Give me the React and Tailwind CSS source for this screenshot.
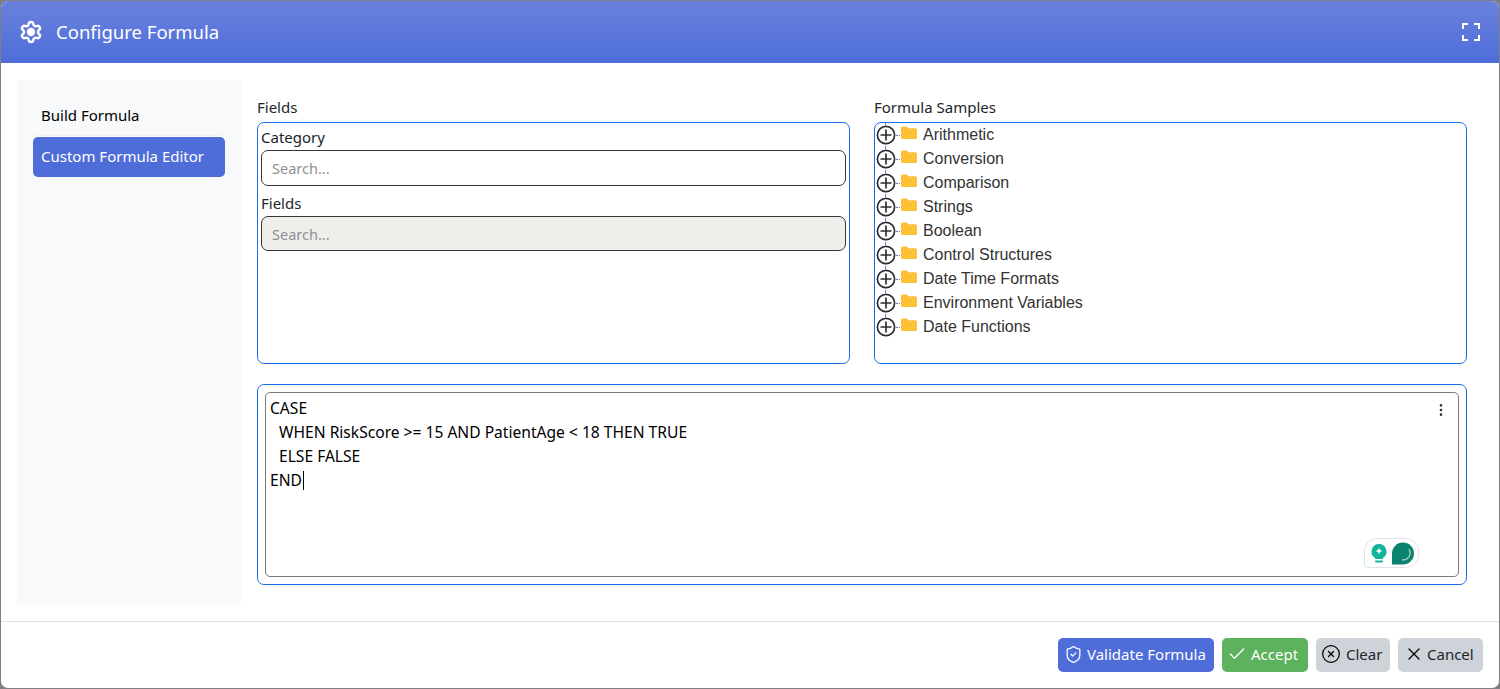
import { Settings, ShieldCheck, Check, CircleX, X, EllipsisVertical } from "lucide-react";

const samples = [
  "Arithmetic",
  "Conversion",
  "Comparison",
  "Strings",
  "Boolean",
  "Control Structures",
  "Date Time Formats",
  "Environment Variables",
  "Date Functions",
];

function TreeRow({ label, last }) {
  return (
    <div className="flex h-6 items-center">
      <div className="relative h-6 w-[21px] shrink-0">
        {/* dotted tree line */}
        <div className={`absolute left-[10px] top-0 w-0 border-l border-dotted border-[#5b7bd5] ${last ? "h-3" : "h-6"}`} />
        <svg width="20" height="20" viewBox="0 0 20 20" className="absolute left-px top-0.5">
          <circle cx="10" cy="10" r="8.6" fill="#fff" stroke="#2b2e33" strokeWidth="1.7" />
          <path d="M4.5 10h11M10 4.5v11" stroke="#2b2e33" strokeWidth="1.7" />
        </svg>
      </div>
      <div className="w-[4px] border-t border-dotted border-[#5b7bd5]" />
      <svg width="16" height="13" viewBox="0 0 16 13" className="ml-px mb-1.5 shrink-0">
        <path d="M0 2a1.5 1.5 0 0 1 1.5-1.5h4.2l1.8 1.8h7A1.5 1.5 0 0 1 16 3.8v7.7A1.5 1.5 0 0 1 14.5 13h-13A1.5 1.5 0 0 1 0 11.5z" fill="#fdc136" />
      </svg>
      <span className="ml-[6px] font-['Liberation_Sans',sans-serif] text-[16px] text-[#333]">{label}</span>
    </div>
  );
}

function FooterButton({ className, icon, children }) {
  return (
    <button className={`flex h-[34px] items-center rounded-[5px] pb-[2px] text-[15px] ${className}`}>
      {icon}
      {children}
    </button>
  );
}

export default function App() {
  return (
    <div className="h-[689px] w-[1500px] overflow-hidden bg-[#7d7f84] p-px font-['Noto_Sans',sans-serif] text-[15px] text-[#212529]">
      <div className="flex h-[687px] flex-col overflow-hidden rounded-[7px] bg-white">
        <header className="flex h-[62px] shrink-0 items-center justify-between bg-gradient-to-b from-[#6a82de] to-[#4e6dd8] pl-[18px] pr-[19px] text-white">
          <div className="flex items-center gap-[13px]">
            <Settings size={24} strokeWidth={2.4} className="[&_circle]:fill-white" />
            <h1 className="text-[18.5px]">Configure Formula</h1>
          </div>
          <svg width="18" height="18" viewBox="0 0 18 18" fill="none" stroke="#fff" strokeWidth="2">
            <path d="M1 6V1h5M12 1h5v5M17 12v5h-5M6 17H1v-5" />
          </svg>
        </header>

        <main className="flex min-h-0 flex-1 gap-4 pl-4 pr-8 pt-[17px]">
          <aside className="h-[525px] w-[224px] shrink-0 bg-[#f8f9fb] px-4 pt-4">
            <div className="flex h-[40px] items-center rounded-[5px] border-b border-[#eff1f5] px-2 text-black">Build Formula</div>
            <div className="mt-px flex h-[40px] items-center rounded-[5px] bg-[#4e6dd8] px-2 pb-0.5 text-white">Custom Formula Editor</div>
          </aside>

          <section className="min-w-0 flex-1 pt-[17px]">
            <div className="grid grid-cols-2 gap-6">
              <div>
                <div className="flex h-[25px] items-start leading-[20px]">Fields</div>
                <div className="h-[242px] rounded-[7px] border border-[#1b6fe8] px-[3px] pt-1">
                  <div className="leading-5">Category</div>
                  <div className="mt-[3px] flex h-9 items-center rounded-[7px] border border-[#33363b] px-[10px] pt-px text-[14.5px] text-[#8d9196]">Search...</div>
                  <div className="mt-[7px] leading-5">Fields</div>
                  <div className="mt-[3px] flex h-[35px] items-center rounded-[7px] border border-[#33363b] bg-[#eeeeea] px-[10px] pt-0.5 text-[14.5px] text-[#8d9196]">Search...</div>
                </div>
              </div>
              <div>
                <div className="flex h-[25px] items-start leading-[20px]">Formula Samples</div>
                <div className="h-[242px] overflow-hidden rounded-[7px] border border-[#1b6fe8]">
                  {samples.map((s, i) => (
                    <TreeRow key={s} label={s} last={i === samples.length - 1} />
                  ))}
                </div>
              </div>
            </div>

            <div className="mt-5 h-[201px] rounded-[7px] border border-[#1b6fe8] p-[7px]">
              <div className="relative h-[185px] rounded-[5px] border border-[#7a7a7a] pl-1 pt-[3px] text-[15.6px] leading-6 text-black">
                <div>CASE</div>
                <div className="pl-[9px]">WHEN RiskScore &gt;= 15 AND PatientAge &lt; 18 THEN TRUE</div>
                <div className="pl-[9px]">ELSE FALSE</div>
                <div className="flex items-center">
                  END
                  <span className="ml-px h-[19px] w-px bg-black" />
                </div>
                <EllipsisVertical size={16} className="absolute right-[9px] top-[9px] text-[#33363b]" />
                {/* floating assistant widget */}
                <div className="absolute bottom-[8px] right-[39px] flex h-[30px] w-[55px] items-center gap-[5px] rounded-[13px] rounded-bl-[4px] border border-[#dfe3e8] bg-white pl-[6px]">
                  <svg width="16" height="21" viewBox="0 0 16 21">
                    <path d="M8 1a7.5 7.5 0 0 0-4 13.8V16h8v-1.2A7.5 7.5 0 0 0 8 1z" fill="#14b39b" />
                    <path d="M8 4.5l1 2.5 2.5 1-2.5 1-1 2.5-1-2.5-2.5-1 2.5-1z" fill="#fff" />
                    <rect x="4" y="17.5" width="8" height="2" rx="1" fill="#14b39b" />
                  </svg>
                  <svg width="22" height="23" viewBox="0 0 23 23">
                    <path d="M0 23V11.5A11.5 11.5 0 1 1 11.5 23z" fill="#0c8270" />
                    <path d="M17.5 7a7 7 0 0 1-7 11" fill="none" stroke="#b6dcd5" strokeWidth="1.2" />
                  </svg>
                </div>
              </div>
            </div>
          </section>
        </main>

        <footer className="flex h-[67px] shrink-0 items-center justify-end gap-2 border-t border-[#dee2e6] pr-[16px]">
          <FooterButton className="w-[156px] gap-1 bg-[#4e6dd8] pl-[6px] text-white" icon={<ShieldCheck size={19} strokeWidth={1.6} />}>
            Validate Formula
          </FooterButton>
          <FooterButton className="w-[86px] gap-1 bg-[#5cb25d] pl-[5px] text-white" icon={<Check size={20} strokeWidth={1.6} />}>
            Accept
          </FooterButton>
          <FooterButton className="w-[74px] gap-[5px] bg-[#ced3d9] pl-[5px] text-[#212529]" icon={<CircleX size={20} strokeWidth={1.5} className="text-black" />}>
            Clear
          </FooterButton>
          <FooterButton className="w-[85px] gap-[3px] bg-[#ced3d9] pl-[6px] text-[#212529]" icon={<X size={20} strokeWidth={1.5} className="text-black" />}>
            Cancel
          </FooterButton>
        </footer>
      </div>
    </div>
  );
}
